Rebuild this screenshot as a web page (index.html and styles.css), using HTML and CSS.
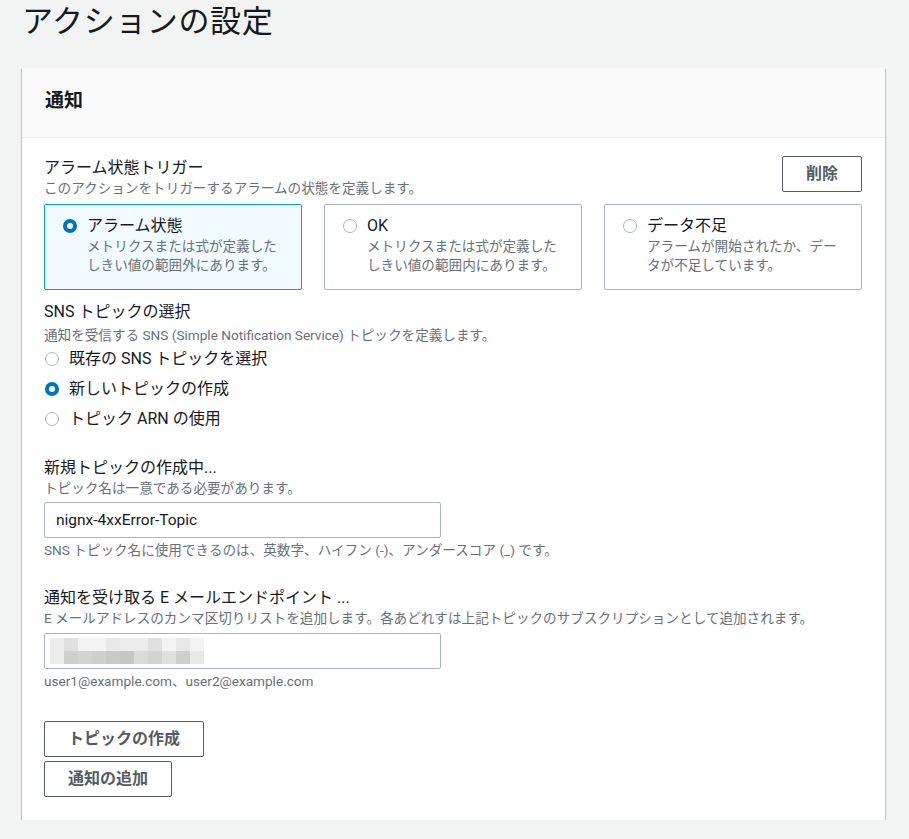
FILE: index.html
```html
<!DOCTYPE html>
<html lang="ja">
<head>
<meta charset="utf-8">
<title>アクションの設定</title>
<link rel="stylesheet" href="styles.css">
</head>
<body>
<div class="page">
  <h1 class="page-title">アクションの設定</h1>
  <section class="card">
    <header class="card-header"><h2>通知</h2></header>
    <div class="card-body">
      <div class="trigger-row">
        <div class="field-head">
          <div class="label">アラーム状態トリガー</div>
          <div class="desc">このアクションをトリガーするアラームの状態を定義します。</div>
        </div>
        <button class="btn btn-delete">削除</button>
      </div>
      <div class="tiles">
        <div class="tile selected">
          <span class="radio checked"></span>
          <div class="tile-text">
            <div class="tile-title">アラーム状態</div>
            <div class="tile-desc">メトリクスまたは式が定義した<br>しきい値の範囲外にあります。</div>
          </div>
        </div>
        <div class="tile">
          <span class="radio"></span>
          <div class="tile-text">
            <div class="tile-title">OK</div>
            <div class="tile-desc">メトリクスまたは式が定義した<br>しきい値の範囲内にあります。</div>
          </div>
        </div>
        <div class="tile">
          <span class="radio"></span>
          <div class="tile-text">
            <div class="tile-title">データ不足</div>
            <div class="tile-desc">アラームが開始されたか、デー<br>タが不足しています。</div>
          </div>
        </div>
      </div>

      <div class="sns">
        <div class="label">SNS トピックの選択</div>
        <div class="desc sns-desc">通知を受信する SNS (Simple Notification Service) トピックを定義します。</div>
        <div class="radio-group">
          <div class="radio-row"><span class="radio"></span><span>既存の SNS トピックを選択</span></div>
          <div class="radio-row"><span class="radio checked"></span><span>新しいトピックの作成</span></div>
          <div class="radio-row"><span class="radio"></span><span>トピック ARN の使用</span></div>
        </div>
      </div>

      <div class="field topic-field">
        <div class="label">新規トピックの作成中...</div>
        <div class="desc">トピック名は一意である必要があります。</div>
        <div class="input">nignx-4xxError-Topic</div>
        <div class="hint">SNS トピック名に使用できるのは、英数字、ハイフン (-)、アンダースコア (_) です。</div>
      </div>

      <div class="field email-field">
        <div class="label">通知を受け取る E メールエンドポイント ...</div>
        <div class="desc">E メールアドレスのカンマ区切りリストを追加します。各あどれすは上記トピックのサブスクリプションとして追加されます。</div>
        <div class="input">
          <div class="blur">
            <span class="g2"></span><span class="g4"></span><span class="g1"></span><span class="g1"></span><span class="g3"></span><span class="g2"></span><span class="g2"></span><span class="g4"></span><span class="g1"></span><span class="g3"></span><span class="g1"></span>
            <span class="g2"></span><span class="d2"></span><span class="d3"></span><span class="d2"></span><span class="d4"></span><span class="d5"></span><span class="d1"></span><span class="d3"></span><span class="d0"></span><span class="d2"></span><span class="g3"></span>
          </div>
        </div>
        <div class="hint">user1@example.com、user2@example.com</div>
      </div>

      <div class="actions">
        <button class="btn">トピックの作成</button>
        <button class="btn">通知の追加</button>
      </div>
    </div>
  </section>
</div>
</body>
</html>
```

FILE: styles.css
```css
* { box-sizing: border-box; }
html, body { margin: 0; padding: 0; }
body {
  background: #f2f3f3;
  color: #16191f;
  font-family: Roboto, "Noto Sans CJK JP", sans-serif;
  font-size: 14px;
}
.page { padding: 0 24px 0 22px; }
.page-title {
  margin: 0;
  font-size: 31px;
  font-weight: 400;
  line-height: 44px;
  letter-spacing: 0.6px;
  color: #16191f;
}
.card {
  margin-top: 24px;
  background: #fff;
  box-shadow: 0 1px 1px 0 rgba(0,28,36,.3), 1px 1px 1px 0 rgba(0,28,36,.15), -1px 1px 1px 0 rgba(0,28,36,.15);
}
.card-header {
  height: 70px;
  background: #fafafa;
  border-bottom: 1px solid #eaeded;
  display: flex;
  align-items: center;
  padding: 0 23px 4px;
}
.card-header h2 {
  margin: 0;
  font-size: 19px;
  font-weight: 700;
  line-height: 24px;
}
.card-body { padding: 18px 23px 23px 22px; }

.label { font-size: 16px; line-height: 20px; color: #16191f; }
.desc { font-size: 13.6px; line-height: 20px; color: #687078; }

.trigger-row { display: flex; justify-content: space-between; align-items: flex-start; }
.field-head { padding-top: 2px; }

.btn {
  font-family: inherit;
  font-size: 16px;
  font-weight: 700;
  color: #545b64;
  background: #fff;
  border: 1px solid #545b64;
  border-radius: 2px;
  height: 36px;
  padding: 0 23px;
  line-height: 20px;
  cursor: pointer;
}
.btn-delete { width: 80px; padding: 0; }

.tiles {
  display: grid;
  grid-template-columns: repeat(3, 1fr);
  gap: 22px;
  margin-top: 6px;
}
.tile {
  height: 86px;
  border: 1px solid #aab7b8;
  border-radius: 2px;
  display: flex;
  align-items: flex-start;
  padding: 11px 10px 0 18px;
  background: #fff;
}
.tile.selected { background: #f1faff; border-color: #00a1c9; }
.tile .radio { margin-top: 3px; margin-right: 10px; }
.tile-title { font-size: 16px; line-height: 20px; }
.tile-desc { font-size: 13.6px; line-height: 19px; color: #687078; margin-top: 1px; }

.radio {
  flex: none;
  display: inline-block;
  width: 14px;
  height: 14px;
  border-radius: 50%;
  border: 1px solid #aab7b8;
  background: #fff;
}
.radio.checked { border: 4px solid #0073bb; }

.sns { margin-top: 12px; }
.sns-desc { margin-top: 3px; }
.radio-group { display: flex; flex-direction: column; gap: 10px; margin-top: 4px; }
.radio-row {
  display: flex;
  align-items: center;
  gap: 10px;
  font-size: 16px;
  line-height: 20px;
  padding-left: 1px;
}

.field { display: flex; flex-direction: column; align-items: flex-start; }
.topic-field { margin-top: 29px; }
.email-field { margin-top: 28px; }
.input {
  margin-top: 4px;
  width: 397px;
  height: 36px;
  border: 1px solid #aab7b8;
  border-radius: 2px;
  padding: 0 11px;
  display: flex;
  align-items: center;
  font-size: 15.5px;
  color: #16191f;
  background: #fff;
}
.email-field .input { margin-top: 5px; padding: 0 5px; }
.hint { font-size: 13.6px; line-height: 20px; color: #687078; margin-top: 2px; }

.blur { display: grid; grid-template-columns: repeat(11, 14px); grid-auto-rows: 13px; }
.blur span { display: block; }
.g1 { background: #f3f3f3; }
.g2 { background: #ececec; }
.g3 { background: #e8e8e8; }
.g4 { background: #e0e0e0; }
.d0 { background: #e0e0e0; }
.d1 { background: #dadada; }
.d2 { background: #cfcfcf; }
.d3 { background: #d3d3d3; }
.d4 { background: #c9c9c9; }
.d5 { background: #c6c6c6; }

.actions { display: flex; flex-direction: column; align-items: flex-start; gap: 4px; margin-top: 30px; }
```
